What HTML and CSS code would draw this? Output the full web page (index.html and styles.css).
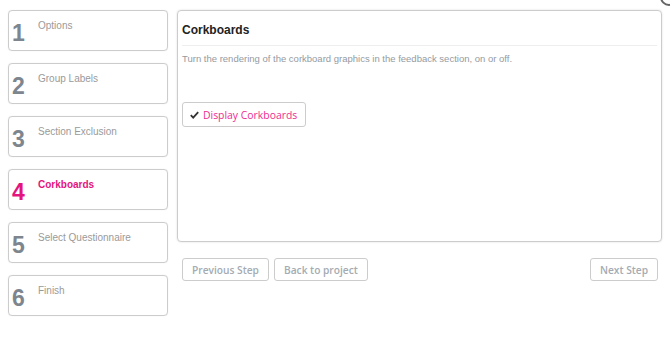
FILE: index.html
```html
<!DOCTYPE html>
<html lang="en">
<head>
  <meta charset="UTF-8" />
  <title>Report Wizard - Corkboards</title>
  <link rel="stylesheet" href="styles.css">
</head>
<body>

  <div class="corner"></div>

  <div class="wizard">
    <!-- steps -->
    <ul class="steps">
      <li class="step"><span class="num">1</span><span class="label">Options</span></li>
      <li class="step"><span class="num">2</span><span class="label">Group Labels</span></li>
      <li class="step"><span class="num">3</span><span class="label">Section Exclusion</span></li>
      <li class="step active"><span class="num">4</span><span class="label">Corkboards</span></li>
      <li class="step"><span class="num">5</span><span class="label">Select Questionnaire</span></li>
      <li class="step"><span class="num">6</span><span class="label">Finish</span></li>
    </ul>

    <div class="content">
      <div class="panel">
        <h2>Corkboards</h2>
        <p class="desc">Turn the rendering of the corkboard graphics in the feedback section, on or off.</p>
        <button class="toggle">
          <svg width="9" height="8" viewBox="0 0 9 8"><path d="M0.8 4.2 L3.2 6.6 L8.2 1.2" fill="none" stroke="#333" stroke-width="1.8"/></svg>
          Display Corkboards
        </button>
      </div>

      <div class="nav">
        <button class="btn">Previous Step</button>
        <button class="btn">Back to project</button>
        <button class="btn next">Next Step</button>
      </div>
    </div>
  </div>

</body>
</html>
```

FILE: styles.css
```css
html, body {
  margin: 0;
  padding: 0;
  width: 100%;
  height: 100%;
  overflow: hidden;
  background: #fff;
  font-family: "Liberation Sans", Arial, sans-serif;
}

.corner {
  position: absolute;
  top: -12px;
  right: -8px;
  width: 14px;
  height: 14px;
  border: 2px solid #666;
  border-radius: 50%;
}

.wizard {
  display: flex;
  gap: 9px;
  padding: 10px 0 0 8px;
}

.steps {
  list-style: none;
  margin: 0;
  padding: 0;
  width: 160px;
  display: flex;
  flex-direction: column;
  gap: 12px;
}

.step {
  box-sizing: border-box;
  height: 41px;
  border: 1px solid #ccc;
  border-radius: 4px;
  box-shadow: 0 0 1px rgba(0,0,0,0.15);
  display: flex;
  align-items: flex-start;
  padding: 9px 0 0 3px;
}

.num {
  font-size: 23px;
  font-weight: bold;
  color: #7d868e;
  width: 26px;
  line-height: 24px;
  margin-top: 1px;
}

.label {
  font-size: 10px;
  color: #9a9a9a;
  line-height: 12px;
}

.step.active .num,
.step.active .label {
  color: #e5137e;
}

.step.active .label {
  font-weight: bold;
}

.content {
  width: 485px;
}

.panel {
  box-sizing: border-box;
  height: 232px;
  border: 1px solid #ccc;
  border-radius: 4px;
  box-shadow: 0 0 2px rgba(0,0,0,0.15);
  padding: 0 4px;
}

.panel h2 {
  margin: 0;
  padding: 12px 0 8px;
  font-size: 12px;
  color: #222;
  border-bottom: 1px solid #eee;
}

.desc {
  margin: 7px 0 0;
  font-size: 9.5px;
  color: #959a9f;
}

.toggle {
  margin-top: 38px;
  height: 25px;
  width: 124px;
  border: 1px solid #ccc;
  border-radius: 3px;
  background: #fff;
  color: #ee2a8e;
  font-family: "Open Sans", sans-serif;
  font-size: 10.4px;
  padding: 0 0 0 7px;
  text-align: left;
  display: flex;
  align-items: center;
  gap: 4px;
}

.nav {
  display: flex;
  gap: 5px;
  padding: 16px 4px 0 5px;
}

.btn {
  height: 23px;
  border: 1px solid #ccc;
  border-radius: 3px;
  background: #fff;
  color: #a4abb2;
  font-family: "Open Sans", sans-serif;
  font-weight: 600;
  font-size: 10.2px;
  padding: 0 9px;
}

.btn.next {
  margin-left: auto;
}
```
